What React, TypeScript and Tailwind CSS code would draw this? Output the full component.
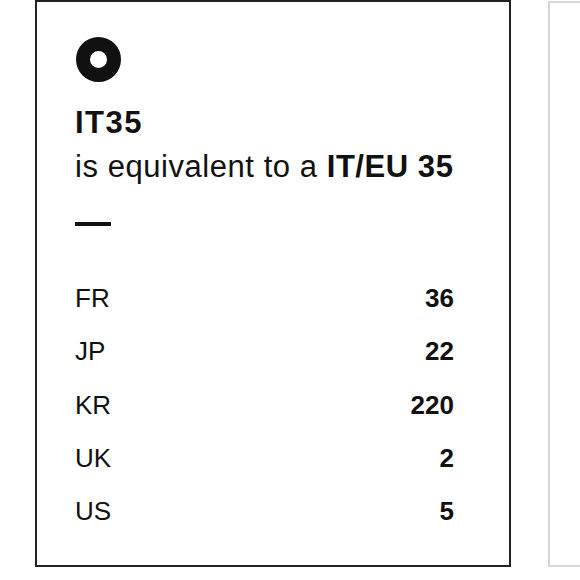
import React from "react";

const rows: [string, string][] = [
  ["FR", "36"],
  ["JP", "22"],
  ["KR", "220"],
  ["UK", "2"],
  ["US", "5"],
];

export default function App() {
  return (
    <div
      className="flex h-[580px] w-[580px] gap-[37px] overflow-hidden bg-white pl-[35px] text-[#111]"
      style={{ fontFamily: '"Liberation Sans", Arial, sans-serif' }}
    >
      <div className="flex h-[567px] w-[476px] shrink-0 flex-col border-2 border-[#222] pl-[38px] pr-[55px] pt-[35px]">
        <div className="ml-[1px] h-[45px] w-[45px] rounded-full border-[14px] border-[#111]" />
        <div className="mt-[19px] text-[31px] font-bold leading-[44px] tracking-[1.5px]">IT35</div>
        <div className="text-[31px] leading-[44px] tracking-[0.55px] whitespace-nowrap">
          is equivalent to a <span className="font-bold">IT/EU 35</span>
        </div>
        <div className="mt-[33px] h-[4px] w-[36px] bg-[#111]" />
        <div className="mt-[46px] flex flex-col">
          {rows.map(([k, v]) => (
            <div key={k} className="flex h-[53.3px] items-center justify-between text-[26px] leading-[53.3px]">
              <span>{k}</span>
              <span className="font-bold">{v}</span>
            </div>
          ))}
        </div>
      </div>
      <div className="mt-[1px] h-[566px] w-[476px] shrink-0 border-2 border-[#d6d6d6]" />
    </div>
  );
}
